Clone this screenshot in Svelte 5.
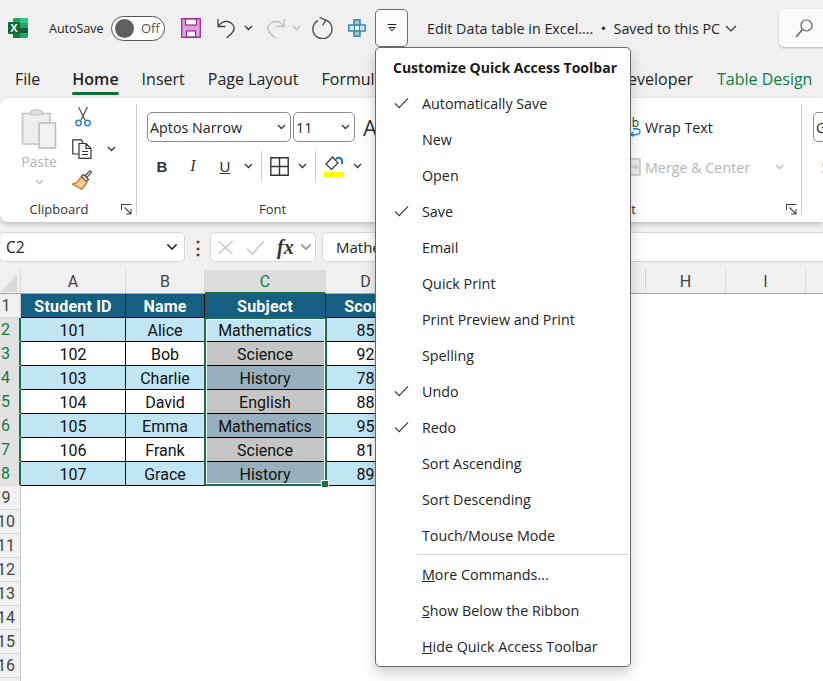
<script>
  const tabs = ["File", "Home", "Insert", "Page Layout", "Formulas", "Data", "Review", "View", "Developer"];

  const columns = [
    { name: "A", width: 105 },
    { name: "B", width: 79 },
    { name: "C", width: 121, selected: true },
    { name: "D", width: 80 },
    { name: "E", width: 80 },
    { name: "F", width: 80 },
    { name: "G", width: 80 },
    { name: "H", width: 80 },
    { name: "I", width: 80 },
    { name: "J", width: 80 }
  ];

  const students = [
    ["101", "Alice", "Mathematics", "85"],
    ["102", "Bob", "Science", "92"],
    ["103", "Charlie", "History", "78"],
    ["104", "David", "English", "88"],
    ["105", "Emma", "Mathematics", "95"],
    ["106", "Frank", "Science", "81"],
    ["107", "Grace", "History", "89"]
  ];

  // the selection tints every cell but the active one
  const subjectFill = (i) => (i === 0 ? "band" : i % 2 === 0 ? "slate" : "grey");
  const blankRows = [9, 10, 11, 12, 13, 14, 15, 16, 17];

  const menuItems = [
    { label: "Automatically Save", checked: true },
    { label: "New" },
    { label: "Open" },
    { label: "Save", checked: true },
    { label: "Email" },
    { label: "Quick Print" },
    { label: "Print Preview and Print" },
    { label: "Spelling" },
    { label: "Undo", checked: true },
    { label: "Redo", checked: true },
    { label: "Sort Ascending" },
    { label: "Sort Descending" },
    { label: "Touch/Mouse Mode" }
  ];

  const menuFooter = [
    { key: "M", rest: "ore Commands..." },
    { key: "S", rest: "how Below the Ribbon" },
    { key: "H", rest: "ide Quick Access Toolbar" }
  ];
</script>

{#snippet chev(color = "#333")}
  <svg class="chev" width="9" height="6" viewBox="0 0 9 6" fill="none" stroke={color} stroke-width="1.3"><path d="M1 1l3.5 3.5L8 1" /></svg>
{/snippet}

{#snippet launcher()}
  <svg class="launcher" width="11" height="11" viewBox="0 0 11 11" fill="none" stroke="#444" stroke-width="1.1"><path d="M.5 6V.5H10.5M3.5 3.5L9.5 9.5M5 10H10V5" /></svg>
{/snippet}

<div class="app">
  <header class="titlebar">
    <svg class="logo" width="20" height="20" viewBox="0 0 20 20">
      <rect x="5" y="0" width="15" height="20" rx="1.5" fill="#21a366" />
      <rect x="12" y="0" width="8" height="5" fill="#33c481" />
      <rect x="5" y="10" width="7" height="10" fill="#107c41" />
      <rect x="12" y="10" width="8" height="5" fill="#185c37" />
      <rect x="0" y="4" width="12" height="12" rx="1.2" fill="#0e6b38" />
      <text x="6" y="14" text-anchor="middle" class="logo-x">X</text>
    </svg>
    <span class="autosave">AutoSave</span>
    <div class="toggle"><span class="knob"></span><span>Off</span></div>
    <svg class="save" width="20" height="20" viewBox="0 0 20 20">
      <path d="M.7.7H19.3V19.3H.7Z" fill="#dc9edc" stroke="#98259b" stroke-width="1.2" />
      <rect x="4.5" y="1" width="11" height="6" fill="#fff" stroke="#98259b" stroke-width="1.2" />
      <rect x="5.5" y="13" width="9" height="6" fill="#fff" stroke="#98259b" stroke-width="1.2" />
    </svg>
    <svg class="undo" width="20" height="21" viewBox="0 0 20 21" fill="none" stroke="#444" stroke-width="1.3">
      <path d="M1 1V8.5H8.5M1.5 8C4 4.5 7 3 10.5 3.5C15 4.5 18 8 17 11.5C16.5 13.5 12 18 9.5 20" />
    </svg>
    <span class="undo-chev">{@render chev()}</span>
    <svg class="redo" width="20" height="21" viewBox="0 0 20 21" fill="none" stroke="#bbb" stroke-width="1.3">
      <path d="M19 1V8.5H11.5M18.5 8C16 4.5 13 3 9.5 3.5C5 4.5 2 8 3 11.5C3.5 13.5 8 18 10.5 20" />
    </svg>
    <span class="undo-chev">{@render chev("#bbb")}</span>
    <svg class="refresh" width="21" height="22" viewBox="0 0 21 22" fill="none" stroke="#444" stroke-width="1.3">
      <path d="M14 3.2A9.6 9.6 0 1 1 6 3.6M7.5 0.5L13.8 3.1L10.5 8.5" />
    </svg>
    <svg class="cross" width="18" height="18" viewBox="0 0 18 18">
      <rect x="6" y="0.8" width="6" height="16.4" fill="#9fd0a8" stroke="#2f7fc4" stroke-width="1.4" />
      <rect x="0.8" y="6" width="16.4" height="6" fill="#cfe4f5" stroke="#2f7fc4" stroke-width="1.4" />
      <rect x="6.5" y="6.7" width="5" height="4.6" fill="#fff" stroke="#3f9a5c" />
    </svg>
    <div class="qat-button">
      <svg width="10" height="9" viewBox="0 0 10 9" fill="none" stroke="#222"><path d="M.5.5H9.5M2 3.5L5 7L8 3.5Z" /></svg>
    </div>
    <span class="doc-title">Edit Data table in Excel.... &nbsp;•&nbsp; Saved to this PC</span>
    <svg class="doc-chev" width="12" height="7" viewBox="0 0 12 7" fill="none" stroke="#333" stroke-width="1.2"><path d="M1 1l5 5 5-5" /></svg>
    <div class="search">
      <svg width="18" height="19" viewBox="0 0 18 19" fill="none" stroke="#555" stroke-width="1.2"><circle cx="11.5" cy="6.5" r="5.5" /><path d="M7.5 10.5L1 18" /></svg>
    </div>
  </header>

  <nav class="tabs">
    {#each tabs as tab}
      <span class="tab" class:active={tab === "Home"} class:file={tab === "File"} class:dev={tab === "Developer"}>{tab}</span>
    {/each}
    <span class="tab design">Table Design</span>
  </nav>

  <section class="ribbon">
    <div class="group clipboard">
      <div class="group-body clip-body">
        <div class="paste">
          <svg width="36" height="41" viewBox="0 0 36 41">
            <path d="M1.5 5.5H29V36H1.5Z" fill="#eee" stroke="#c4c4c4" stroke-width="1.6" />
            <path d="M10 5V2.5H13C13.5.8 17.5.8 18 2.5H21V7H10Z" fill="#ddd" stroke="#c4c4c4" stroke-width="1.2" />
            <rect x="18" y="15" width="16.5" height="25" fill="#f2f2f2" stroke="#bdbdbd" stroke-width="1.6" />
          </svg>
          <span class="paste-label">Paste</span>
          {@render chev("#bbb")}
        </div>
        <div class="clip-tools">
          <svg width="16" height="20" viewBox="0 0 16 20" fill="none" stroke-width="1.1">
            <path d="M3.5 0L10 13M12.5 0L6 13" stroke="#444" />
            <circle cx="3.5" cy="16" r="2.7" stroke="#1e83d0" stroke-width="1.4" />
            <circle cx="12.5" cy="16" r="2.7" stroke="#1e83d0" stroke-width="1.4" />
          </svg>
          <div class="copy-row">
            <svg width="20" height="20" viewBox="0 0 20 20" fill="none" stroke="#333" stroke-width="1.2">
              <path d="M7 15H.8V.8H9.5L11 4" />
              <path d="M7 4.5H14L19 9.5V19.3H7ZM14 4.5V9.5H19M10 12.5H16M10 15.5H16" fill="#fff" />
            </svg>
            <span class="copy-chev">{@render chev()}</span>
          </div>
          <svg class="painter" width="20" height="20" viewBox="0 0 20 20" fill="none">
            <path d="M12.5 6.5L17.5 1.2C18.5.4 19.7 1.6 19 2.6L14.2 8.2" stroke="#444" stroke-width="1.2" />
            <path d="M9.5 6.5L11.5 4.5L16.5 9.5L14.5 11.5Z" stroke="#444" stroke-width="1.2" fill="#fff" />
            <path d="M9 7L15 12.5L9.5 19L0.7 14L5 12.5Z" fill="#fbd6a8" stroke="#d9741a" stroke-width="1.4" />
          </svg>
        </div>
      </div>
      <div class="group-label clip-label">Clipboard</div>
      {@render launcher()}
    </div>

    <div class="group font">
      <div class="group-body">
        <div class="font-row">
          <div class="select font-name"><span>Aptos Narrow</span>{@render chev()}</div>
          <div class="select font-size"><span>11</span>{@render chev()}</div>
          <span class="grow-a">A</span>
        </div>
        <div class="format-row">
          <span class="fmt bold">B</span>
          <span class="fmt italic">I</span>
          <span class="fmt under">U</span>
          <span class="fmt-chev">{@render chev()}</span>
          <span class="vsep"></span>
          <svg class="borders" width="19" height="19" viewBox="0 0 19 19" fill="none" stroke="#333" stroke-width="1.4"><path d="M.8.8H18.2V18.2H.8ZM9.5.8V18.2M.8 9.5H18.2" /></svg>
          <span class="fmt-chev">{@render chev()}</span>
          <span class="vsep"></span>
          <div class="fill">
            <svg width="20" height="15" viewBox="0 0 20 15" fill="none"><path d="M8.5 1L2 8L7.5 13.5L14 7Z" stroke="#333" stroke-width="1.2" /><path d="M12 3.5C13 1 17 1 18 4.5V8" stroke="#1e6fb8" stroke-width="2" /></svg>
            <span class="fill-bar"></span>
          </div>
          <span class="fmt-chev">{@render chev()}</span>
        </div>
      </div>
      <div class="group-label font-label">Font</div>
    </div>

    <div class="group alignment">
      <div class="group-body align-body">
        <div class="align-line wrap">
          <svg width="16" height="20" viewBox="0 0 16 20" fill="none">
            <text x="0" y="10" class="wrap-ab">ab</text>
            <path d="M8 12C14 11 16 13 14.5 16C13.5 18 10 18 6 17.5M8.5 15L5.5 17.5L8.5 19.5" stroke="#1e83d0" stroke-width="1.3" />
          </svg>
          <span>Wrap Text</span>
        </div>
        <div class="align-line merge">
          <svg width="16" height="18" viewBox="0 0 16 18"><rect x="1" y="1" width="14" height="16" fill="#eee" stroke="#c8c8c8" stroke-width="1.6" /><path d="M6 9H13M10 6.5L13 9L10 11.5" fill="none" stroke="#bbb" /></svg>
          <span>Merge &amp; Center</span>
          <span class="merge-chev">{@render chev("#bbb")}</span>
        </div>
      </div>
      <div class="group-label">Alignment</div>
      {@render launcher()}
    </div>

    <div class="group number">
      <div class="select number-select">General</div>
      <div class="currency">$</div>
    </div>
  </section>

  <div class="formula-bar">
    <div class="name-box"><span>C2</span>{@render chev()}</div>
    <span class="dots">⋮</span>
    <div class="fx-box">
      <svg width="17" height="15" viewBox="0 0 17 15" fill="none" stroke="#c4c4c4" stroke-width="1.3"><path d="M1.5 1L15.5 14M15.5 1L1.5 14" /></svg>
      <svg width="19" height="15" viewBox="0 0 19 15" fill="none" stroke="#c4c4c4" stroke-width="1.3"><path d="M1 8.5L6.5 14L18 1" /></svg>
      <span class="fx">fx</span>
      {@render chev("#999")}
    </div>
    <div class="formula-input">Mathematics</div>
  </div>

  <div class="sheet">
    <div class="col-heads">
      <div class="corner"><span class="tri"></span></div>
      {#each columns as col}
        <div class="col-head" class:selected={col.selected} style="width:{col.width}px">{col.name}</div>
      {/each}
    </div>

    <div class="row">
      <div class="row-head">1</div>
      <div class="cell head" style="width:105px">Student ID</div>
      <div class="cell head" style="width:79px">Name</div>
      <div class="cell head" style="width:121px">Subject</div>
      <div class="cell head" style="width:80px">Score</div>
    </div>

    {#each students as student, i}
      <div class="row">
        <div class="row-head picked">{i + 2}</div>
        <div class="cell" class:band={i % 2 === 0} style="width:105px">{student[0]}</div>
        <div class="cell" class:band={i % 2 === 0} style="width:79px">{student[1]}</div>
        <div class="cell {subjectFill(i)}" style="width:121px">{student[2]}</div>
        <div class="cell" class:band={i % 2 === 0} style="width:80px">{student[3]}</div>
      </div>
    {/each}

    {#each blankRows as n}
      <div class="row"><div class="row-head">{n}</div></div>
    {/each}

    <div class="selection"><span class="handle"></span></div>
  </div>

  <div class="menu">
    <div class="menu-title">Customize Quick Access Toolbar</div>
    {#each menuItems as item}
      <div class="menu-item">
        <span class="check">
          {#if item.checked}
            <svg width="15" height="12" viewBox="0 0 16 12" fill="none" stroke="#333" stroke-width="1.2"><path d="M1 6.5L5.5 11L15 1" /></svg>
          {/if}
        </span>
        {item.label}
      </div>
    {/each}
    <div class="menu-sep"></div>
    {#each menuFooter as item}
      <div class="menu-item"><span class="check"></span><span><u>{item.key}</u>{item.rest}</span></div>
    {/each}
  </div>
</div>

<style>
  :global(body) {
    margin: 0;
    overflow: hidden;
    background: #f0f0f0;
  }

  .app {
    position: relative;
    width: 823px;
    height: 681px;
    overflow: hidden;
    background: #f0f0f0;
    color: #242424;
    font-family: "Open Sans", "Noto Sans", sans-serif;
    font-size: 14.3px;
  }

  /* title bar */
  .titlebar {
    display: flex;
    align-items: center;
    height: 56px;
  }

  .titlebar > * {
    flex: none;
  }

  .logo {
    margin-left: 8px;
  }

  .logo-x {
    fill: #fff;
    font-size: 11px;
    font-weight: 700;
    font-family: "Liberation Sans", sans-serif;
  }

  .autosave {
    margin-left: 21px;
    font-size: 12.5px;
    width: 62px;
  }

  .toggle {
    display: flex;
    align-items: center;
    gap: 7px;
    box-sizing: border-box;
    width: 54px;
    height: 25px;
    padding-left: 3px;
    border: 1px solid #555;
    border-radius: 13px;
    background: #fff;
    font-size: 13px;
    color: #555;
  }

  .knob {
    width: 19px;
    height: 19px;
    border-radius: 50%;
    background: #5f5f5f;
  }

  .save {
    margin-left: 16px;
  }

  .undo {
    margin-left: 16px;
  }

  .undo-chev {
    display: flex;
    margin-left: 7px;
  }

  .redo {
    margin-left: 12px;
  }

  .refresh {
    margin-left: 11px;
  }

  .cross {
    margin-left: 15px;
  }

  .qat-button {
    display: flex;
    align-items: center;
    justify-content: center;
    box-sizing: border-box;
    width: 33px;
    height: 38px;
    margin-left: 9px;
    border: 1px solid #6b6b6b;
    border-radius: 5px;
    background: #fdfdfd;
  }

  .doc-title {
    margin-left: 19px;
    width: 298px;
    white-space: nowrap;
  }

  .search {
    display: flex;
    align-items: center;
    padding-left: 16px;
    box-sizing: border-box;
    width: 60px;
    height: 38px;
    margin-left: 42px;
    border-radius: 5px;
    background: #fbfbfb;
    box-shadow: 0 1px 2px rgba(0, 0, 0, 0.25);
  }

  /* tabs */
  .tabs {
    display: flex;
    align-items: flex-start;
    gap: 23px;
    height: 42px;
    padding: 12px 0 0 15px;
    box-sizing: border-box;
    font-size: 16px;
    line-height: 22px;
    white-space: nowrap;
  }

  .tab {
    position: relative;
    flex: none;
  }

  .tab.file {
    margin-right: 9px;
  }

  .tab.dev {
    margin-left: 11px;
  }

  .tab.active {
    font-weight: 600;
  }

  .tab.active::after {
    content: "";
    position: absolute;
    left: 0;
    right: 0;
    top: 24px;
    height: 3px;
    border-radius: 2px;
    background: #0f6c3b;
  }

  .design {
    color: #107c41;
    margin-left: 1px;
  }

  /* ribbon */
  .ribbon {
    display: flex;
    box-sizing: border-box;
    height: 124px;
    padding-top: 6px;
    background: #fff;
    border-radius: 8px 0 0 8px;
    box-shadow: 0 2px 5px rgba(0, 0, 0, 0.22);
  }

  .group {
    position: relative;
    display: flex;
    flex-direction: column;
    flex: none;
    box-sizing: border-box;
    height: 111px;
    border-right: 1px solid #d0d0d0;
  }

  .group-body {
    flex: 1;
  }

  .group-label {
    height: 12px;
    line-height: 12px;
    margin-bottom: -1px;
    text-align: center;
    font-size: 13px;
    color: #333;
    position: relative;
    top: -1px;
  }

  .launcher {
    position: absolute;
    right: 4px;
    bottom: 0;
  }

  .clipboard {
    width: 137px;
  }

  .clip-body {
    display: flex;
  }

  .clip-label {
    padding-right: 18px;
  }

  .paste {
    display: flex;
    flex-direction: column;
    align-items: center;
    width: 78px;
    padding-top: 4px;
    margin-right: -6px;
  }

  .paste-label {
    margin-top: 3px;
    color: #b5b5b5;
    font-size: 14px;
    margin-bottom: 8px;
  }

  .clip-tools {
    display: flex;
    flex-direction: column;
    align-items: flex-start;
    justify-content: space-between;
    height: 83px;
    padding-top: 3px;
  }

  .clip-tools > svg:first-child {
    margin-left: 3px;
  }

  .copy-row {
    display: flex;
    align-items: center;
  }

  .copy-chev {
    display: flex;
    margin-left: 15px;
  }

  .font {
    width: 272px;
    padding-left: 10px;
  }

  .font-label {
    margin-left: -10px;
  }

  .font-row {
    display: flex;
    align-items: center;
    gap: 2px;
    margin-top: 8px;
  }

  .select {
    display: flex;
    align-items: center;
    justify-content: space-between;
    box-sizing: border-box;
    height: 30px;
    padding: 0 4px 0 2px;
    border: 1px solid #8a8a8a;
    border-radius: 5px;
    background: #fff;
    font-size: 14.3px;
  }

  .font-name {
    width: 144px;
  }

  .font-size {
    width: 62px;
    margin-right: 6px;
  }

  .grow-a {
    font-size: 22px;
    color: #333;
  }

  .format-row {
    display: flex;
    align-items: center;
    height: 30px;
    margin-top: 9px;
  }

  .fmt {
    width: 20px;
    text-align: center;
    font-size: 15px;
    color: #333;
  }

  .bold {
    margin-left: 5px;
    font-weight: 700;
    font-family: "Liberation Sans", sans-serif;
  }

  .italic {
    margin-left: 11px;
    font-style: italic;
    font-family: "Liberation Serif", serif;
    font-size: 16px;
  }

  .under {
    margin-left: 12px;
    text-decoration: underline;
    font-family: "Liberation Sans", sans-serif;
  }

  .fmt-chev {
    display: flex;
    margin-left: 9px;
  }

  .vsep {
    width: 1px;
    height: 30px;
    margin: 0 8px;
    background: #d0d0d0;
  }

  .borders {
    flex: none;
  }

  .fill {
    display: flex;
    flex-direction: column;
    align-items: center;
    width: 20px;
  }

  .fill-bar {
    width: 20px;
    height: 5px;
    margin-top: 1px;
    background: #ffff00;
  }

  .alignment {
    width: 393px;
  }

  .align-body {
    padding: 13px 0 0 216px;
  }

  .align-line {
    display: flex;
    align-items: center;
    gap: 4px;
    height: 20px;
    white-space: nowrap;
  }

  .wrap-ab {
    fill: #333;
    font-size: 12px;
  }

  .merge {
    margin-top: 20px;
    color: #b5b5b5;
  }

  .merge-chev {
    display: flex;
    margin-left: 21px;
  }

  .number {
    flex: 1;
    padding: 8px 0 0 11px;
    border-right: none;
  }

  .number-select {
    width: 60px;
  }

  .currency {
    margin-top: 14px;
    margin-left: 8px;
    color: #b5b5b5;
    font-size: 16px;
  }

  /* formula bar */
  .formula-bar {
    display: flex;
    align-items: stretch;
    height: 30px;
    margin-top: 10px;
  }

  .name-box,
  .fx-box,
  .formula-input {
    display: flex;
    align-items: center;
    box-sizing: border-box;
    border: 1px solid #d8d8d8;
    border-radius: 5px;
    background: #fff;
  }

  .name-box {
    justify-content: space-between;
    width: 186px;
    margin-left: -1px;
    padding: 0 6px;
    font-size: 15.5px;
  }

  .name-box .chev {
    width: 12px;
    height: 8px;
  }

  .dots {
    width: 25px;
    text-align: center;
    font-size: 18px;
    line-height: 30px;
    font-weight: 700;
    color: #444;
  }

  .fx-box {
    width: 106px;
    gap: 12px;
    padding-left: 6px;
  }

  .fx {
    margin-right: -6px;
    font-family: "Liberation Serif", serif;
    font-style: italic;
    font-weight: 700;
    font-size: 20px;
    color: #333;
  }

  .fx-box .chev {
    width: 12px;
    height: 8px;
  }

  .formula-input {
    flex: 1;
    margin-left: 6px;
    margin-right: -5px;
    padding-left: 13px;
    font-size: 15px;
  }

  /* sheet */
  .sheet {
    position: relative;
    margin-top: 8px;
    background: #fff;
    font-family: Roboto, "Liberation Sans", sans-serif;
    font-size: 16px;
    color: #111;
  }

  .col-heads {
    display: flex;
    height: 24px;
    background: #f0f0f0;
    box-sizing: border-box;
    border-bottom: 1px solid #a8a8a8;
  }

  .corner {
    position: relative;
    width: 21px;
    flex: none;
    border-right: 1px solid #d8d8d8;
    box-sizing: border-box;
  }

  .tri {
    position: absolute;
    right: 3px;
    bottom: 1px;
    border-style: solid;
    border-width: 0 0 18px 16px;
    border-color: transparent transparent #dadada transparent;
  }

  .col-head {
    flex: none;
    box-sizing: border-box;
    text-align: center;
    line-height: 24px;
    border-right: 1px solid #d8d8d8;
    color: #444;
  }

  .col-head.selected {
    background: #dcdcdc;
    color: #107c41;
    border-bottom: 2px solid #1b6f45;
    height: 24px;
  }

  .row {
    display: flex;
    height: 24px;
  }

  .row-head {
    flex: none;
    box-sizing: border-box;
    width: 29px;
    margin-left: -8px;
    text-align: center;
    line-height: 24px;
    background: #f0f0f0;
    border-right: 1px solid #c8c8c8;
    border-bottom: 1px solid #dcdcdc;
    color: #444;
  }

  .row-head.picked {
    background: #e2e2e2;
    color: #107c41;
    border-right: 2px solid #1b6f45;
  }

  .cell {
    flex: none;
    box-sizing: border-box;
    text-align: center;
    line-height: 25px;
    border-right: 1px solid #000;
    border-bottom: 1px solid #000;
    white-space: nowrap;
    overflow: hidden;
  }

  .head {
    background: #156082;
    color: #fff;
    font-weight: 700;
    letter-spacing: 0.2px;
  }

  .band {
    background: #c0e6f5;
  }

  .grey {
    background: #c6c6c6;
  }

  .slate {
    background: #98b0bd;
  }

  .selection {
    position: absolute;
    left: 204px;
    top: 47px;
    width: 123px;
    height: 169px;
    box-sizing: border-box;
    border: 2px solid #1b6f45;
    outline: 1px solid #fff;
    outline-offset: -3px;
    pointer-events: none;
  }

  .handle {
    position: absolute;
    right: -4px;
    bottom: -4px;
    width: 6px;
    height: 6px;
    background: #1b6f45;
    border: 1px solid #fff;
  }

  /* customize menu */
  .menu {
    position: absolute;
    left: 375px;
    top: 47px;
    box-sizing: border-box;
    width: 256px;
    height: 620px;
    padding-top: 2px;
    background: #fff;
    border: 1px solid #6b6b6b;
    border-radius: 5px;
    box-shadow: 0 6px 14px rgba(0, 0, 0, 0.2);
  }

  .menu-title {
    height: 35px;
    padding-left: 17px;
    line-height: 35px;
    font-size: 14px;
    font-weight: 700;
    color: #1a1a1a;
    white-space: nowrap;
  }

  .menu-item {
    display: flex;
    align-items: center;
    height: 36px;
    white-space: nowrap;
  }

  .check {
    display: flex;
    width: 46px;
    box-sizing: border-box;
    padding-left: 18px;
    flex: none;
  }

  .menu-sep {
    height: 1px;
    margin: 1px 1px 1px 41px;
    background: #d4d4d4;
  }
</style>
